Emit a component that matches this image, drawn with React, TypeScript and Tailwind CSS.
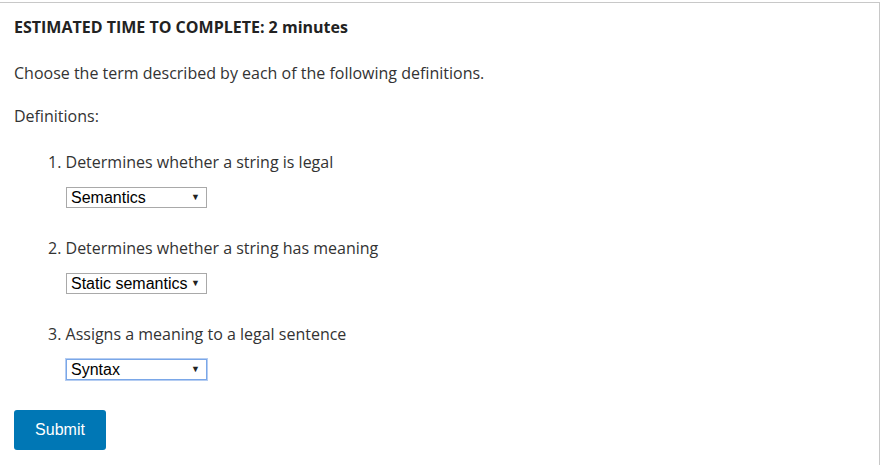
import React from "react";

function FakeSelect({ value, focused }: { value: string; focused?: boolean }) {
  return (
    <div
      className={
        "flex items-center justify-between w-[141px] h-[21px] bg-white pl-[4px] pr-[6px] " +
        (focused ? "border border-[#7aa7e8] shadow-[0_0_0_1px_#b5cdf2]" : "border border-[#a9a9a9]")
      }
      style={{ fontFamily: '"Liberation Sans", Arial, sans-serif' }}
    >
      <span className="text-[16px] leading-none text-black">{value}</span>
      <span className="text-[9px] leading-none text-[#222]">▼</span>
    </div>
  );
}

export default function App() {
  const items = [
    { n: 1, text: "Determines whether a string is legal", value: "Semantics" },
    { n: 2, text: "Determines whether a string has meaning", value: "Static semantics" },
    { n: 3, text: "Assigns a meaning to a legal sentence", value: "Syntax", focused: true },
  ];
  return (
    <div className="bg-white w-[881px] h-[465px] overflow-hidden">
      <div
        className="mt-[2px] w-[880px] h-[463px] border-t border-r border-[#c8c8c8] pl-[14px] pt-[13px] text-[#333]"
        style={{ fontFamily: '"Open Sans", sans-serif' }}
      >
        <div className="text-[16px] leading-[22px] font-bold text-[#222]">
          ESTIMATED TIME TO COMPLETE: 2 minutes
        </div>
        <div className="mt-[24px] text-[16px] leading-[22px]">
          Choose the term described by each of the following definitions.
        </div>
        <div className="mt-[21px] text-[16px] leading-[22px]">Definitions:</div>
        <div className="flex flex-col gap-[29px] mt-[24px] pl-[34px]">
          {items.map((it) => (
            <div key={it.n} className="flex flex-col">
              <div className="text-[16px] leading-[22px]">
                {it.n}. {it.text}
              </div>
              <div className="mt-[14px] pl-[18px]">
                <FakeSelect value={it.value} focused={it.focused} />
              </div>
            </div>
          ))}
        </div>
        <button
          className="mt-[30px] w-[92px] h-[40px] rounded-[3px] bg-[#0077b5] text-white text-[16px]"
          style={{ fontFamily: '"Liberation Sans", Arial, sans-serif' }}
        >
          Submit
        </button>
      </div>
    </div>
  );
}
